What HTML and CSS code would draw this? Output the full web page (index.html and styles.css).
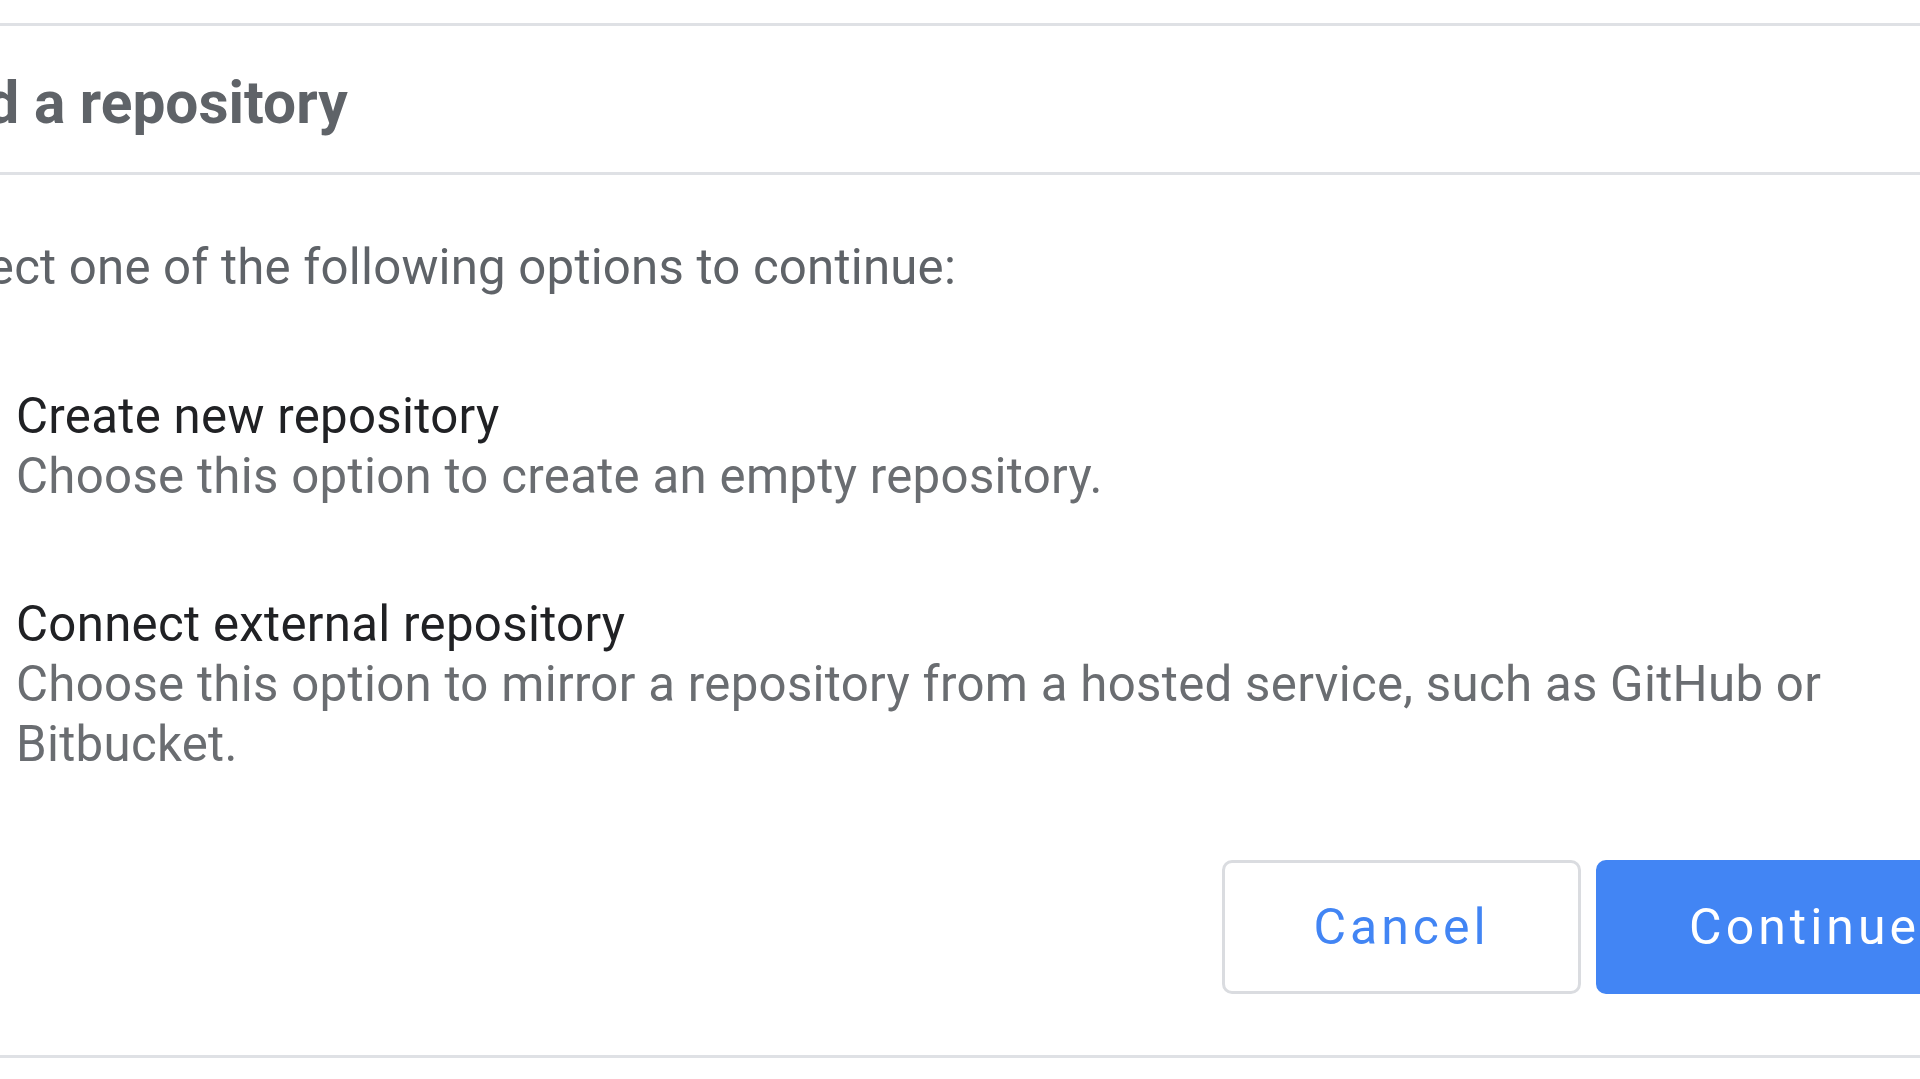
FILE: index.html
```html
<!DOCTYPE html>
<html lang="en">
<head>
<meta charset="utf-8">
<title>Add a repository</title>
<link rel="stylesheet" href="styles.css">
</head>
<body>
<div class="dialog">
  <div class="dialog-header">
    <h1 class="dialog-title">Add a repository</h1>
  </div>
  <div class="dialog-body">
    <p class="intro">Select one of the following options to continue:</p>
    <label class="option">
      <span class="radio"></span>
      <span class="option-text">
        <span class="option-title">Create new repository</span>
        <span class="option-desc">Choose this option to create an empty repository.</span>
      </span>
    </label>
    <label class="option">
      <span class="radio"></span>
      <span class="option-text">
        <span class="option-title">Connect external repository</span>
        <span class="option-desc">Choose this option to mirror a repository from a hosted service, such as GitHub or Bitbucket.</span>
      </span>
    </label>
    <div class="actions">
      <button class="btn btn-secondary" type="button">Cancel</button>
      <button class="btn btn-primary" type="button">Continue</button>
    </div>
  </div>
</div>
</body>
</html>
```
FILE: styles.css
```css
html, body {
  margin: 0;
  padding: 0;
  overflow: hidden;
  background: #ffffff;
}

body {
  font-family: Roboto, "Liberation Sans", sans-serif;
  width: 1920px;
  height: 1079px;
}

.dialog {
  margin-top: 23px;
  margin-left: -112px;
  width: 2157px;
  box-sizing: border-box;
  border-top: 3px solid #dfe1e5;
  border-bottom: 3px solid #dfe1e5;
  background: #ffffff;
}

.dialog-header {
  height: 149px;
  box-sizing: border-box;
  padding: 9px 32px 0 26px;
  display: flex;
  align-items: center;
  border-bottom: 3px solid #dfe1e5;
}

.dialog-title {
  margin: 0;
  font-size: 58.6px;
  font-weight: 700;
  color: #5f6368;
  line-height: 1;
}

.dialog-body {
  padding: 62px 32px 61px 32px;
  display: flex;
  flex-direction: column;
}

.intro {
  margin: 0;
  font-size: 49.2px;
  line-height: 60px;
  letter-spacing: 0.2px;
  color: #5f6368;
}

.option {
  display: flex;
  align-items: flex-start;
  margin-top: 89px;
}

.option + .option {
  margin-top: 88px;
}

.radio {
  flex: none;
  width: 40px;
  height: 40px;
  margin: 10px 56px 0 0;
  box-sizing: border-box;
  border: 5px solid #5f6368;
  border-radius: 50%;
}

.option-text {
  display: flex;
  flex-direction: column;
}

.option-title {
  font-size: 49.2px;
  line-height: 60px;
  letter-spacing: 0.3px;
  color: #202124;
}

.option-desc {
  font-size: 49.2px;
  line-height: 60px;
  letter-spacing: 0.3px;
  color: #6a6d71;
}

.actions {
  margin-top: 86px;
  display: flex;
  justify-content: flex-end;
  gap: 15px;
}

.btn {
  height: 134px;
  box-sizing: border-box;
  padding: 0 90px;
  border-radius: 10px;
  font-family: Roboto, "Liberation Sans", sans-serif;
  font-size: 50px;
  font-weight: 400;
  letter-spacing: 4px;
  cursor: pointer;
}

.btn-secondary {
  padding: 0 88.5px;
  background: #ffffff;
  border: 3px solid #dadce0;
  color: #4285f4;
}

.btn-primary {
  background: #4285f4;
  border: 3px solid #4285f4;
  color: #ffffff;
}
```
